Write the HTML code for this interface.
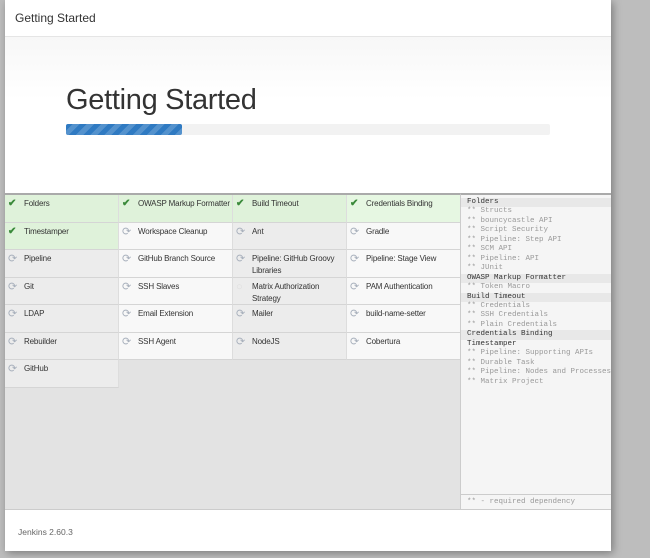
<!DOCTYPE html>
<html><head><meta charset="utf-8"><style>
*{margin:0;padding:0;box-sizing:border-box}
body{width:650px;height:558px;background:#bdbdbd;position:relative;overflow:hidden;font-family:"Liberation Sans",sans-serif}
.dlg{position:absolute;left:5px;top:0;width:606px;height:551px;background:#fff;box-shadow:2px 2px 8px rgba(0,0,0,.35);overflow:hidden}
.hdr{position:absolute;left:0;top:0;width:606px;height:37px;border-bottom:1px solid #e5e5e5;font-size:12px;color:#333;padding:11px 0 0 10px}
.hero{position:absolute;left:0;top:37px;width:606px;height:157px;background:linear-gradient(#f7f7f7,#fff 40%)}
.hero h1{position:absolute;left:61px;top:47px;font-size:29px;font-weight:normal;color:#333;letter-spacing:-0.3px}
.bar{position:absolute;left:61px;top:87px;width:484px;height:11px;background:#f2f2f2;border-radius:2px}
.fill{position:absolute;left:0;top:0;width:116px;height:11px;border-radius:2px;background:#2f7ac2;background-image:repeating-linear-gradient(-45deg,rgba(255,255,255,.18) 0 5px,transparent 5px 10px)}
.grid{position:absolute;left:0;top:193px;width:455px;height:316px;background:#e3e3e3;border-top:2px solid #aaa}
.c{position:absolute;width:114px;height:27.5px;font-size:8px;letter-spacing:-0.15px;white-space:nowrap;color:#333;padding:3px 0 0 19px;line-height:12px;border-right:1px solid #ddd;border-bottom:1px solid #d5d5d5}
.c.two{white-space:normal}
.c .i{position:absolute;left:3px;top:3px;font-size:11px;color:#a8b0bc}
.ok{background:#dff2da}.ok .i{color:#3a8a3a;font-weight:bold;font-size:10px}
.g{background:#ececec}.w{background:#f8f8f8}
.side{position:absolute;left:455px;top:193px;width:151px;height:316px;background:#f5f5f5;border-top:2px solid #aaa;border-left:1px solid #ccc;font-family:"Liberation Mono",monospace;font-size:7.5px;line-height:9.45px;color:#999;white-space:nowrap;overflow:hidden}
.side .h{color:#333;background:#e8e8e8;padding-left:6px}
.side .d{padding-left:6px}
.side .f{position:absolute;left:0;bottom:0;width:150px;height:15px;border-top:1px solid #ccc;padding:3px 0 0 6px}
.foot{position:absolute;left:0;top:509px;width:606px;height:42px;border-top:1px solid #ccc;font-size:8.5px;color:#666;padding:17px 0 0 13px}
</style></head><body>
<div class="dlg">
<div class="hdr">Getting Started</div>
<div class="hero"><h1>Getting Started</h1><div class="bar"><div class="fill"></div></div></div>
<div class="grid">
<div class="c ok" style="left:0;top:0"><span class="i">✔</span>Folders</div>
<div class="c ok" style="left:114px;top:0"><span class="i">✔</span>OWASP Markup Formatter</div>
<div class="c ok" style="left:228px;top:0"><span class="i">✔</span>Build Timeout</div>
<div class="c ok" style="left:342px;top:0;background:#e6f7e2"><span class="i">✔</span>Credentials Binding</div>
<div class="c ok" style="left:0;top:27.5px"><span class="i">✔</span>Timestamper</div>
<div class="c w" style="left:114px;top:27.5px"><span class="i">⟳</span>Workspace Cleanup</div>
<div class="c g" style="left:228px;top:27.5px"><span class="i">⟳</span>Ant</div>
<div class="c w" style="left:342px;top:27.5px"><span class="i">⟳</span>Gradle</div>
<div class="c g" style="left:0;top:55px"><span class="i">⟳</span>Pipeline</div>
<div class="c w" style="left:114px;top:55px"><span class="i">⟳</span>GitHub Branch Source</div>
<div class="c g two" style="left:228px;top:55px"><span class="i">⟳</span>Pipeline: GitHub Groovy Libraries</div>
<div class="c w" style="left:342px;top:55px"><span class="i">⟳</span>Pipeline: Stage View</div>
<div class="c g" style="left:0;top:82.5px"><span class="i">⟳</span>Git</div>
<div class="c w" style="left:114px;top:82.5px"><span class="i">⟳</span>SSH Slaves</div>
<div class="c g two" style="left:228px;top:82.5px"><span class="i" style="color:#ddd">○</span>Matrix Authorization Strategy</div>
<div class="c w" style="left:342px;top:82.5px"><span class="i">⟳</span>PAM Authentication</div>
<div class="c g" style="left:0;top:110px"><span class="i">⟳</span>LDAP</div>
<div class="c w" style="left:114px;top:110px"><span class="i">⟳</span>Email Extension</div>
<div class="c g" style="left:228px;top:110px"><span class="i">⟳</span>Mailer</div>
<div class="c w" style="left:342px;top:110px"><span class="i">⟳</span>build-name-setter</div>
<div class="c g" style="left:0;top:137.5px"><span class="i">⟳</span>Rebuilder</div>
<div class="c w" style="left:114px;top:137.5px"><span class="i">⟳</span>SSH Agent</div>
<div class="c g" style="left:228px;top:137.5px"><span class="i">⟳</span>NodeJS</div>
<div class="c w" style="left:342px;top:137.5px"><span class="i">⟳</span>Cobertura</div>
<div class="c g" style="left:0;top:165px"><span class="i">⟳</span>GitHub</div>
</div>
<div class="side">
<div class="h" style="margin-top:3px">Folders</div>
<div class="d">** Structs<br>** bouncycastle API<br>** Script Security<br>** Pipeline: Step API<br>** SCM API<br>** Pipeline: API<br>** JUnit</div>
<div class="h">OWASP Markup Formatter</div>
<div class="d">** Token Macro</div>
<div class="h">Build Timeout</div>
<div class="d">** Credentials<br>** SSH Credentials<br>** Plain Credentials</div>
<div class="h">Credentials Binding</div>
<div class="h" style="background:none">Timestamper</div>
<div class="d">** Pipeline: Supporting APIs<br>** Durable Task<br>** Pipeline: Nodes and Processes<br>** Matrix Project</div>
<div class="f">** - required dependency</div>
</div>
<div class="foot">Jenkins 2.60.3</div>
</div>
</body></html>
